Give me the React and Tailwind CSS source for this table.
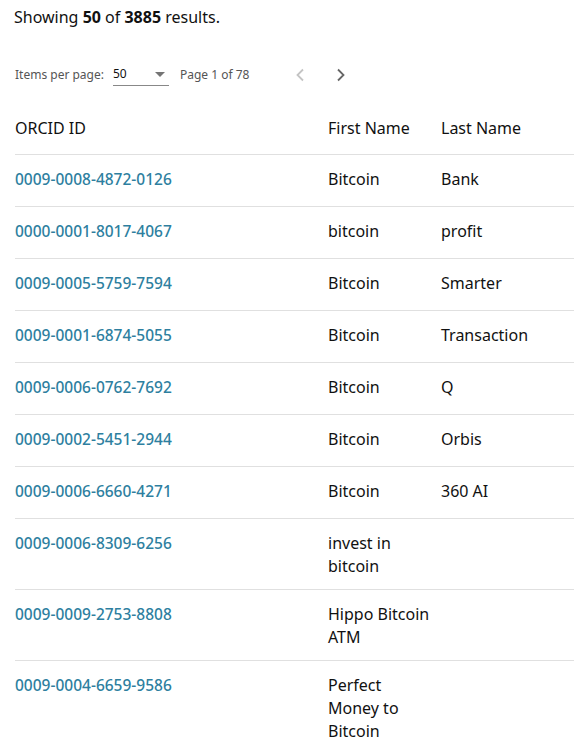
import React from "react";

const rows = [
  ["0009-0008-4872-0126", ["Bitcoin"], ["Bank"]],
  ["0000-0001-8017-4067", ["bitcoin"], ["profit"]],
  ["0009-0005-5759-7594", ["Bitcoin"], ["Smarter"]],
  ["0009-0001-6874-5055", ["Bitcoin"], ["Transaction"]],
  ["0009-0006-0762-7692", ["Bitcoin"], ["Q"]],
  ["0009-0002-5451-2944", ["Bitcoin"], ["Orbis"]],
  ["0009-0006-6660-4271", ["Bitcoin"], ["360 AI"]],
  ["0009-0006-8309-6256", ["invest in", "bitcoin"], []],
  ["0009-0009-2753-8808", ["Hippo Bitcoin", "ATM"], []],
  ["0009-0004-6659-9586", ["Perfect", "Money to", "Bitcoin"], []],
];

export default function App() {
  return (
    <div className="h-[752px] overflow-hidden bg-white text-[#111] font-['Noto_Sans',sans-serif]">
      <p className="pl-[14px] pt-[6px] text-[16px] leading-[23px]">
        Showing <b className="font-bold">50</b> of <b className="font-bold">3885</b> results.
      </p>
      <div className="mt-[28px] flex h-[36px] items-center pl-[15px] text-[12px] text-[#555]">
        <span>Items per page:</span>
        <div className="ml-[9px] flex h-[22px] w-[56px] items-center justify-between border-b border-[#888] pb-[1px] text-[#111]">
          <span>50</span>
          <svg width="10" height="5" viewBox="0 0 10 5" className="mr-[4px]">
            <path d="M0 0 L10 0 L5 5 Z" fill="#757575" />
          </svg>
        </div>
        <span className="ml-[11px]">Page 1 of 78</span>
        <svg width="10" height="14" viewBox="0 0 10 14" className="ml-[46px]">
          <path d="M8 1.5 L2.5 7 L8 12.5" fill="none" stroke="#c4c4c4" strokeWidth="1.8" />
        </svg>
        <svg width="10" height="14" viewBox="0 0 10 14" className="ml-[31px]">
          <path d="M2 1.5 L7.5 7 L2 12.5" fill="none" stroke="#666" strokeWidth="1.8" />
        </svg>
      </div>
      <table className="ml-[15px] mt-[9px] w-[559px] border-collapse text-left text-[16px] leading-[23px]">
        <thead>
          <tr className="h-[52px] border-b border-[#e0e0e0]">
            <th className="w-[313px] align-middle pt-[1px] font-normal">ORCID ID</th>
            <th className="w-[113px] align-middle pt-[1px] font-normal">First Name</th>
            <th className="align-middle pt-[1px] font-normal">Last Name</th>
          </tr>
        </thead>
        <tbody>
          {rows.map(([id, first, last]) => (
            <tr key={id} className="h-[52px] border-b border-[#e0e0e0]">
              <td className="align-top pt-[13px] pb-[11px] text-[15.5px] font-medium text-[#2e7f9f]">{id}</td>
              <td className="align-top pt-[13px] pb-[11px]">
                {first.map((l) => (
                  <div key={l}>{l}</div>
                ))}
              </td>
              <td className="align-top pt-[13px] pb-[11px]">
                {last.map((l) => (
                  <div key={l}>{l}</div>
                ))}
              </td>
            </tr>
          ))}
        </tbody>
      </table>
    </div>
  );
}
